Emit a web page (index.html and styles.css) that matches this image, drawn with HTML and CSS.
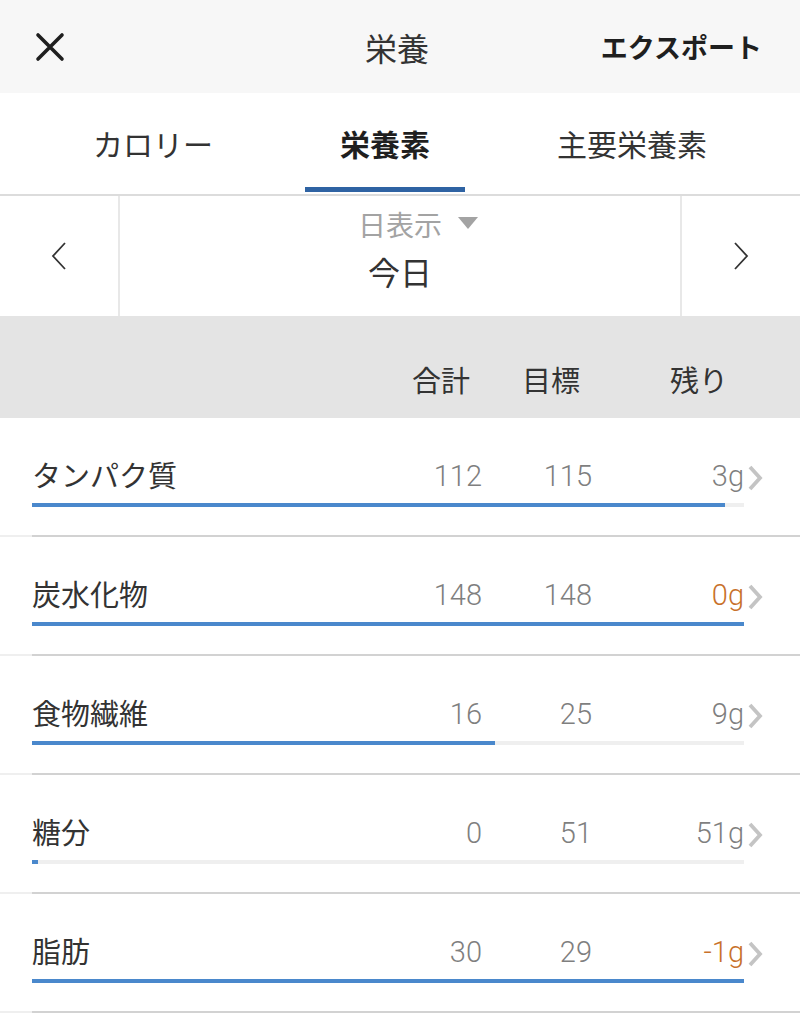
FILE: index.html
```html
<!DOCTYPE html>
<html lang="ja">
<head>
    <meta charset="UTF-8">
    <meta name="viewport" content="width=device-width, initial-scale=1.0">
    <title>栄養</title>
    <link rel="stylesheet" href="styles.css">
</head>
<body>
    <header class="topbar">
        <button class="close-btn" aria-label="閉じる">
            <svg width="30" height="30" viewBox="0 0 30 30"><path d="M3 3 L27 27 M27 3 L3 27" stroke="#1f1f1f" stroke-width="3.6" stroke-linecap="round"/></svg>
        </button>
        <div class="topbar-title">栄養</div>
        <div class="export">エクスポート</div>
    </header>

    <nav class="tabs">
        <div class="tab">カロリー</div>
        <div class="tab active">栄養素</div>
        <div class="tab">主要栄養素</div>
    </nav>

    <div class="date-nav">
        <div class="date-arrow">
            <svg width="16" height="30" viewBox="0 0 16 30"><polyline points="14,2 2,15 14,28" fill="none" stroke="#333" stroke-width="1.8"/></svg>
        </div>
        <div class="date-center">
            <div class="date-mode"><span class="mode-text">日表示<span class="caret"></span></span></div>
            <div class="date-label">今日</div>
        </div>
        <div class="date-arrow">
            <svg width="16" height="30" viewBox="0 0 16 30"><polyline points="2,2 14,15 2,28" fill="none" stroke="#333" stroke-width="1.8"/></svg>
        </div>
    </div>

    <div class="col-head">
        <span class="col-total">合計</span>
        <span class="col-goal">目標</span>
        <span class="col-left">残り</span>
    </div>

    <div class="nutrient">
        <div class="nutrient-line">
            <span class="n-name">タンパク質</span>
            <span class="n-num">112</span>
            <span class="n-num">115</span>
            <span class="n-num">3g</span>
            <span class="n-chev"><svg width="16" height="28" viewBox="0 0 16 28"><polyline points="3,3 13,14 3,25" fill="none" stroke="#c4c4c4" stroke-width="3.8"/></svg></span>
        </div>
        <div class="bar"><div class="bar-fill" style="width: 97.4%"></div></div>
    </div>

    <div class="nutrient">
        <div class="nutrient-line">
            <span class="n-name">炭水化物</span>
            <span class="n-num">148</span>
            <span class="n-num">148</span>
            <span class="n-num over">0g</span>
            <span class="n-chev"><svg width="16" height="28" viewBox="0 0 16 28"><polyline points="3,3 13,14 3,25" fill="none" stroke="#c4c4c4" stroke-width="3.8"/></svg></span>
        </div>
        <div class="bar"><div class="bar-fill" style="width: 100%"></div></div>
    </div>

    <div class="nutrient">
        <div class="nutrient-line">
            <span class="n-name">食物繊維</span>
            <span class="n-num">16</span>
            <span class="n-num">25</span>
            <span class="n-num">9g</span>
            <span class="n-chev"><svg width="16" height="28" viewBox="0 0 16 28"><polyline points="3,3 13,14 3,25" fill="none" stroke="#c4c4c4" stroke-width="3.8"/></svg></span>
        </div>
        <div class="bar"><div class="bar-fill" style="width: 65%"></div></div>
    </div>

    <div class="nutrient">
        <div class="nutrient-line">
            <span class="n-name">糖分</span>
            <span class="n-num">0</span>
            <span class="n-num">51</span>
            <span class="n-num">51g</span>
            <span class="n-chev"><svg width="16" height="28" viewBox="0 0 16 28"><polyline points="3,3 13,14 3,25" fill="none" stroke="#c4c4c4" stroke-width="3.8"/></svg></span>
        </div>
        <div class="bar"><div class="bar-fill" style="width: 6px"></div></div>
    </div>

    <div class="nutrient">
        <div class="nutrient-line">
            <span class="n-name">脂肪</span>
            <span class="n-num">30</span>
            <span class="n-num">29</span>
            <span class="n-num over">-1g</span>
            <span class="n-chev"><svg width="16" height="28" viewBox="0 0 16 28"><polyline points="3,3 13,14 3,25" fill="none" stroke="#c4c4c4" stroke-width="3.8"/></svg></span>
        </div>
        <div class="bar"><div class="bar-fill" style="width: 100%"></div></div>
    </div>
</body>
</html>
```

FILE: styles.css
```css
body {
    margin: 0;
    background: #fff;
    font-family: "Noto Sans CJK JP", "Noto Sans", sans-serif;
    color: #333;
}
.topbar {
    height: 93px;
    background: #f7f7f7;
    display: flex;
    align-items: center;
    padding: 0 38px 0 32px;
}
.close-btn {
    border: none;
    background: none;
    padding: 0;
    width: 36px;
    height: 36px;
    display: flex;
    align-items: center;
    justify-content: center;
}
.topbar-title {
    flex: 1;
    text-align: center;
    font-size: 32px;
    line-height: 40px;
    color: #333;
    margin-left: 130px;
}
.export {
    font-size: 27px;
    font-weight: 700;
    line-height: 40px;
    color: #1f1f1f;
    width: 166px;
    text-align: right;
}
.tabs {
    height: 101px;
    display: flex;
    justify-content: space-between;
    padding: 0 58px;
    border-bottom: 2px solid #dcdcdc;
}
.tab {
    padding: 0 35px;
    font-size: 30px;
    line-height: 101px;
    color: #333;
    border-bottom: 5px solid transparent;
    margin-bottom: -3px;
    height: 99px;
    box-sizing: border-box;
}
.tab.active {
    font-weight: 700;
    color: #1f1f1f;
    border-bottom-color: #2f63a3;
}
.date-nav {
    height: 120px;
    display: flex;
}
.date-arrow {
    width: 118px;
    display: flex;
    align-items: center;
    justify-content: center;
}
.date-center {
    flex: 1;
    border-left: 2px solid #e8e8e8;
    border-right: 2px solid #e8e8e8;
    text-align: center;
    padding-top: 10px;
}
.date-mode {
    font-size: 28px;
    line-height: 36px;
    color: #a3a3a3;
}
.mode-text {
    position: relative;
}
.caret {
    position: absolute;
    left: 100%;
    top: 13px;
    width: 0;
    height: 0;
    border-left: 10px solid transparent;
    border-right: 10px solid transparent;
    border-top: 12px solid #a3a3a3;
    margin-left: 16px;
}
.date-label {
    font-size: 32px;
    line-height: 42px;
    margin-top: 8px;
    color: #333;
}
.col-head {
    height: 102px;
    background: #e4e4e4;
    box-sizing: border-box;
    padding-top: 43px;
    display: flex;
    justify-content: flex-end;
    padding-right: 72px;
    font-size: 29px;
    line-height: 40px;
    color: #333;
}
.col-goal {
    margin-left: 52px;
}
.col-left {
    margin-left: 90px;
}
.nutrient {
    height: 119px;
    box-sizing: border-box;
    padding: 34px 0 0 32px;
    background: linear-gradient(to right, #efefef 32px, #d2d2d2 32px) bottom / 100% 2px no-repeat;
}
.nutrient-line {
    display: grid;
    grid-template-columns: 1fr 100px 110px 152px 56px;
    align-items: center;
    height: 40px;
}
.n-name {
    font-size: 29px;
    line-height: 40px;
    color: #333;
}
.n-num {
    font-family: Roboto, "Liberation Sans", sans-serif;
    font-weight: 300;
    font-size: 29px;
    line-height: 40px;
    text-align: right;
    color: #7f7f7f;
    padding-top: 4px;
}
.n-num.over {
    color: #c8712a;
}
.n-chev {
    display: flex;
    align-items: center;
    padding-left: 3px;
    padding-top: 8px;
}
.bar {
    width: 712px;
    height: 4px;
    margin-top: 11px;
    background: #efefef;
}
.bar-fill {
    height: 100%;
    background: #4a88cc;
}
```
